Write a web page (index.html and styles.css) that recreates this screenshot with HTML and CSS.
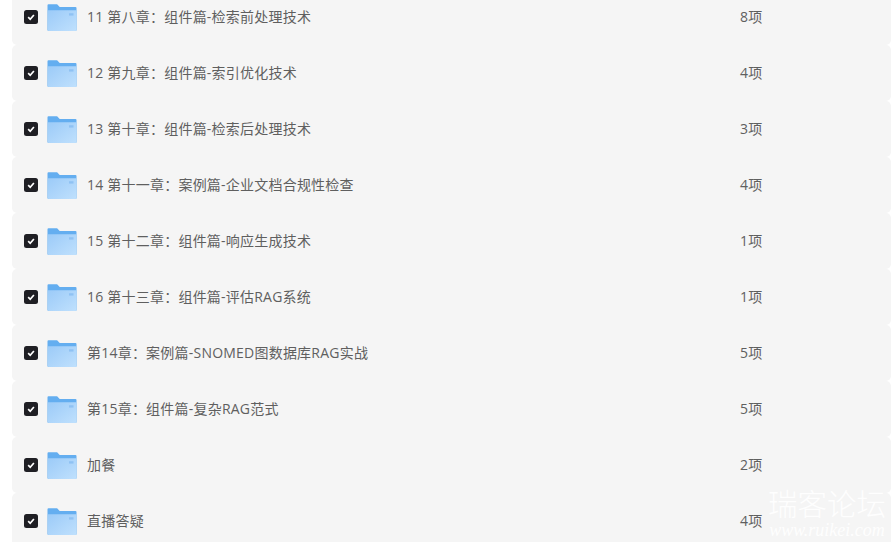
FILE: index.html
```html
<!DOCTYPE html>
<html lang="zh-CN">
<head>
<meta charset="utf-8">
<title>文件列表</title>
<link rel="stylesheet" href="styles.css">
</head>
<body>
<svg class="defs" width="0" height="0" aria-hidden="true">
  <defs>
    <linearGradient id="fg" x1="0" y1="0" x2="1" y2="1">
      <stop offset="0" stop-color="#9ccbf8"/>
      <stop offset="1" stop-color="#bfe0fd"/>
    </linearGradient>
    <symbol id="folder" viewBox="0 0 30 28" preserveAspectRatio="none">
      <path d="M0.5 1.2a1 1 0 0 1 1-1h8.6l2.6 3h15.8a1 1 0 0 1 1 1V27a1 1 0 0 1-1 1H1.5a1 1 0 0 1-1-1z" fill="#64aef0"/>
      <path d="M1 6.6h28.5V27a1 1 0 0 1-1 1H1.5a.8.8 0 0 1-.5-.8z" fill="url(#fg)"/>
      <rect x="22" y="9.6" width="4.5" height="2.4" fill="#8fc2f3"/>
    </symbol>
    <symbol id="check" viewBox="0 0 14 14">
      <rect width="14" height="14" rx="2.5" fill="#1f1f24"/>
      <path d="M4.2 7.2l2 2.1 3.7-4.3" fill="none" stroke="#fff" stroke-width="1.7"/>
    </symbol>
  </defs>
</svg>
<main class="list">
  <div class="row"><svg class="check"><use href="#check"/></svg><svg class="folder"><use href="#folder"/></svg><span class="name">11 第八章：组件篇-检索前处理技术</span><span class="count">8项</span></div>
  <div class="row"><svg class="check"><use href="#check"/></svg><svg class="folder"><use href="#folder"/></svg><span class="name">12 第九章：组件篇-索引优化技术</span><span class="count">4项</span></div>
  <div class="row"><svg class="check"><use href="#check"/></svg><svg class="folder"><use href="#folder"/></svg><span class="name">13 第十章：组件篇-检索后处理技术</span><span class="count">3项</span></div>
  <div class="row"><svg class="check"><use href="#check"/></svg><svg class="folder"><use href="#folder"/></svg><span class="name">14 第十一章：案例篇-企业文档合规性检查</span><span class="count">4项</span></div>
  <div class="row"><svg class="check"><use href="#check"/></svg><svg class="folder"><use href="#folder"/></svg><span class="name">15 第十二章：组件篇-响应生成技术</span><span class="count">1项</span></div>
  <div class="row"><svg class="check"><use href="#check"/></svg><svg class="folder"><use href="#folder"/></svg><span class="name">16 第十三章：组件篇-评估RAG系统</span><span class="count">1项</span></div>
  <div class="row"><svg class="check"><use href="#check"/></svg><svg class="folder"><use href="#folder"/></svg><span class="name">第14章：案例篇-SNOMED图数据库RAG实战</span><span class="count">5项</span></div>
  <div class="row"><svg class="check"><use href="#check"/></svg><svg class="folder"><use href="#folder"/></svg><span class="name">第15章：组件篇-复杂RAG范式</span><span class="count">5项</span></div>
  <div class="row"><svg class="check"><use href="#check"/></svg><svg class="folder"><use href="#folder"/></svg><span class="name">加餐</span><span class="count">2项</span></div>
  <div class="row"><svg class="check"><use href="#check"/></svg><svg class="folder"><use href="#folder"/></svg><span class="name">直播答疑</span><span class="count">4项</span></div>
</main>
<div class="watermark">
  <div class="wm-title">瑞客论坛</div>
  <div class="wm-url">www.ruikei.com</div>
</div>
</body>
</html>
```

FILE: styles.css
```css
html, body {
  margin: 0;
  height: 100%;
  overflow: hidden;
  background: #fff;
}

body {
  font-family: "Open Sans", "Noto Sans CJK SC", sans-serif;
  font-size: 14px;
  letter-spacing: 0.22px;
  color: #5f5f5f;
}

.defs {
  display: block;
  height: 0;
}

.list {
  margin: -11px 0 0 12px;
}

.row {
  display: flex;
  align-items: center;
  height: 56px;
  padding-left: 12px;
  background: #f5f5f5;
  border-radius: 5px;
}

.check {
  width: 14px;
  height: 14px;
  flex: none;
}

.folder {
  width: 30px;
  height: 27px;
  margin: 1px 0 0 9px;
  flex: none;
}

.name {
  margin-left: 10px;
  padding-bottom: 2px;
  width: 653px;
  flex: none;
  white-space: nowrap;
}

.count {
  padding-bottom: 2px;
  white-space: nowrap;
}

.watermark {
  position: absolute;
  right: 5px;
  bottom: 3px;
  width: 118px;
  color: rgba(255, 255, 255, 0.92);
  letter-spacing: 0;
  text-align: center;
}

.wm-title {
  font-family: "Liberation Serif", "Noto Sans CJK SC", sans-serif;
  font-weight: 300;
  font-size: 29.5px;
  line-height: 32px;
  white-space: nowrap;
}

.wm-url {
  font-family: "Liberation Serif", serif;
  font-style: italic;
  font-size: 18px;
  line-height: 18px;
  white-space: nowrap;
}
```
